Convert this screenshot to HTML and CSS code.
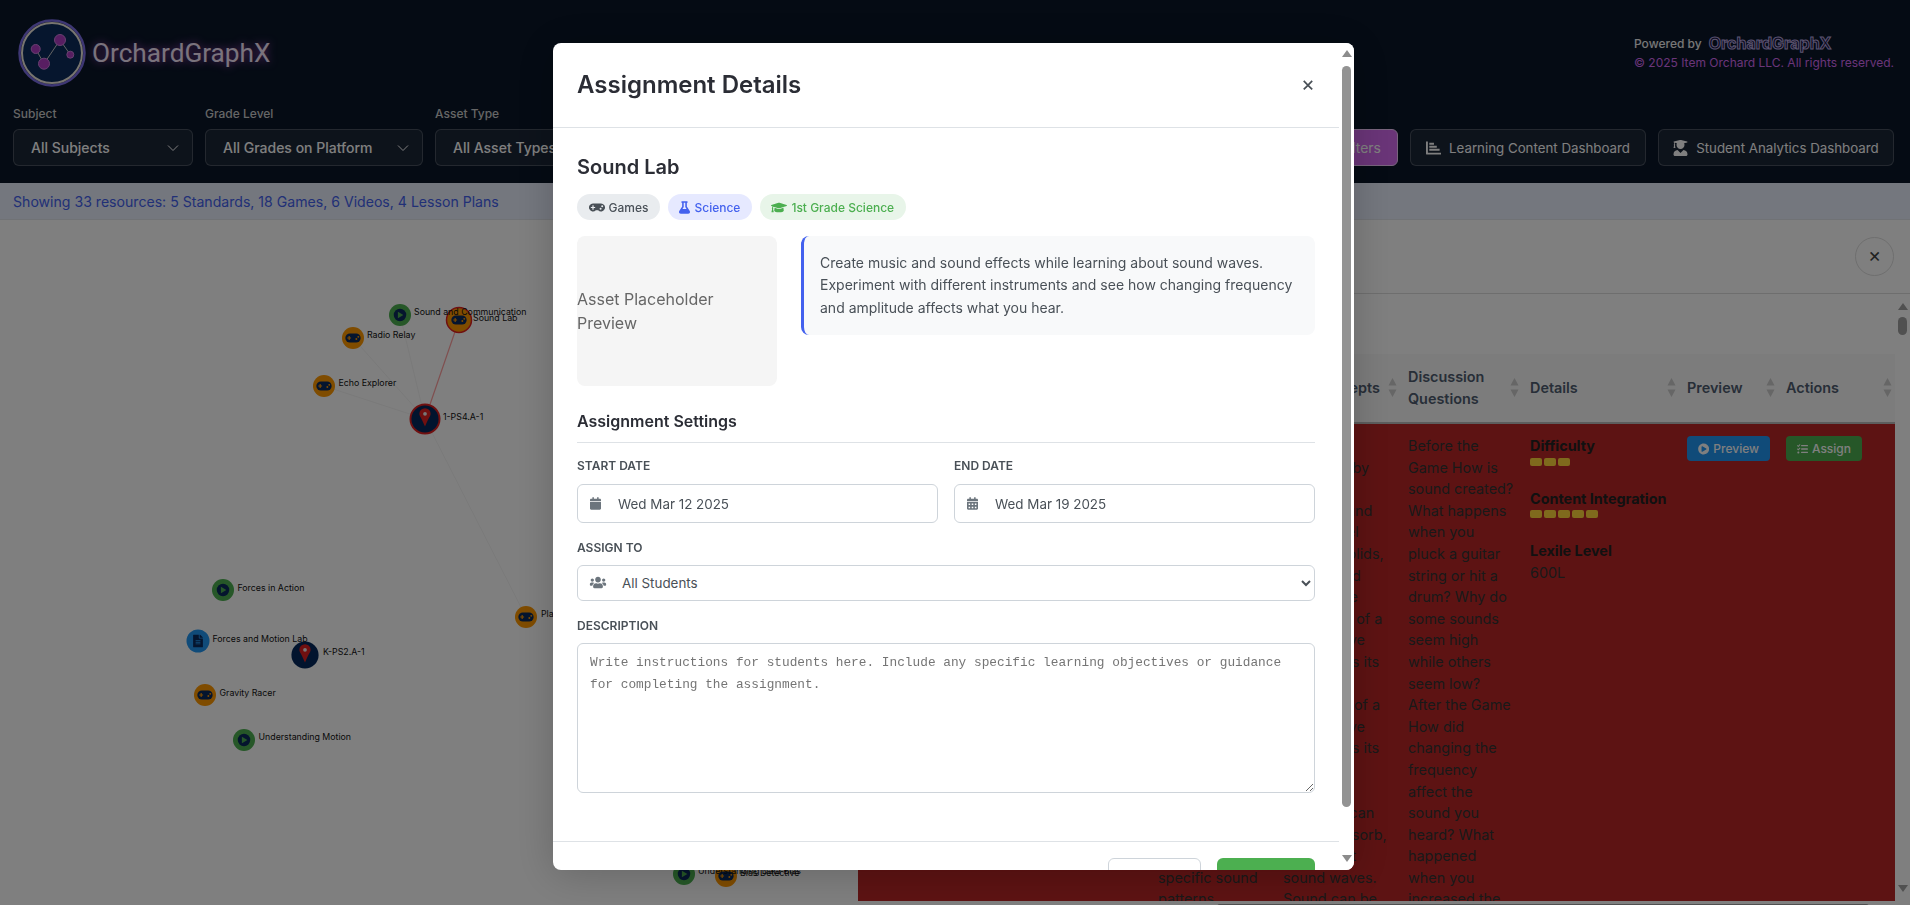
FILE: index.html
```html
<!DOCTYPE html>
<html lang="en">

<head>
    <meta charset="UTF-8">
    <title>OrchardGraphX</title>
    <link rel="stylesheet" href="styles.css">
</head>

<body>
    <!-- Icon set -->
    <svg class="icon-defs">
        <symbol id="i-gamepad" viewBox="0 0 640 512"><path fill-rule="evenodd" d="M480.07 96H160a160 160 0 1 0 114.24 272h91.52A160 160 0 1 0 480.07 96zM248 268a12 12 0 0 1-12 12h-52v52a12 12 0 0 1-12 12h-24a12 12 0 0 1-12-12v-52H84a12 12 0 0 1-12-12v-24a12 12 0 0 1 12-12h52v-52a12 12 0 0 1 12-12h24a12 12 0 0 1 12 12v52h52a12 12 0 0 1 12 12zm216 76a40 40 0 1 1 40-40 40 40 0 0 1-40 40zm64-96a40 40 0 1 1 40-40 40 40 0 0 1-40 40z"/></symbol>
        <symbol id="i-flask" viewBox="0 0 448 512"><path d="M437.2 403.5L320 215V64h8c13.3 0 24-10.7 24-24V24c0-13.3-10.7-24-24-24H120c-13.3 0-24 10.7-24 24v16c0 13.3 10.7 24 24 24h8v151L10.8 403.5C-18.5 450.6 15.3 512 70.9 512h306.2c55.7 0 89.4-61.5 60.1-108.5zM137.9 320l48.2-77.6c3.7-5.2 5.8-11.6 5.8-18.4V64h64v160c0 6.9 2.2 13.2 5.8 18.4l48.2 77.6h-172z"/></symbol>
        <symbol id="i-cap" viewBox="0 0 640 512"><path d="M622.34 153.2L343.4 67.5c-15.2-4.67-31.6-4.67-46.79 0L17.66 153.2c-23.54 7.23-23.54 38.36 0 45.59l48.63 14.94c-10.67 13.19-17.23 29.28-17.88 46.9C38.78 266.15 32 276.11 32 288c0 10.78 5.68 19.85 13.86 25.65L20.33 428.53C18.11 438.52 25.71 448 35.94 448h56.11c10.24 0 17.84-9.48 15.62-19.47L82.14 313.65C90.32 307.85 96 298.78 96 288c0-11.57-6.47-21.25-15.66-26.87.76-15.02 8.44-28.3 20.69-36.72L296.6 284.5c9.06 2.78 26.44 6.25 46.79 0l278.95-85.7c23.55-7.24 23.55-38.36 0-45.6zM352.79 315.09c-28.53 8.76-52.84 3.92-65.59 0l-145.02-44.55L128 384c0 35.35 85.96 64 192 64s192-28.65 192-64l-14.18-113.47-145.03 44.56z"/></symbol>
        <symbol id="i-calendar" viewBox="0 0 448 512"><path d="M12 192h424c6.6 0 12 5.4 12 12v260c0 26.5-21.5 48-48 48H48c-26.5 0-48-21.5-48-48V204c0-6.6 5.4-12 12-12zm436-44v-36c0-26.5-21.5-48-48-48h-48V12c0-6.6-5.4-12-12-12h-40c-6.6 0-12 5.4-12 12v52H160V12c0-6.6-5.400-12-12-12h-40c-6.6 0-12 5.4-12 12v52H48C21.5 64 0 85.5 0 112v36c0 6.6 5.4 12 12 12h424c6.6 0 12-5.4 12-12z"/></symbol>
        <symbol id="i-calendar-alt" viewBox="0 0 448 512"><path d="M0 464c0 26.5 21.5 48 48 48h352c26.5 0 48-21.5 48-48V192H0v272zm320-196c0-6.6 5.4-12 12-12h40c6.6 0 12 5.4 12 12v40c0 6.6-5.4 12-12 12h-40c-6.6 0-12-5.4-12-12v-40zm0 128c0-6.6 5.4-12 12-12h40c6.6 0 12 5.4 12 12v40c0 6.6-5.4 12-12 12h-40c-6.6 0-12-5.4-12-12v-40zM192 268c0-6.6 5.4-12 12-12h40c6.6 0 12 5.4 12 12v40c0 6.6-5.4 12-12 12h-40c-6.6 0-12-5.4-12-12v-40zm0 128c0-6.6 5.4-12 12-12h40c6.6 0 12 5.4 12 12v40c0 6.6-5.4 12-12 12h-40c-6.6 0-12-5.4-12-12v-40zM64 268c0-6.6 5.4-12 12-12h40c6.6 0 12 5.4 12 12v40c0 6.6-5.4 12-12 12H76c-6.6 0-12-5.4-12-12v-40zm0 128c0-6.6 5.4-12 12-12h40c6.6 0 12 5.4 12 12v40c0 6.6-5.4 12-12 12H76c-6.6 0-12-5.4-12-12v-40zM400 64h-48V16c0-8.8-7.2-16-16-16h-32c-8.8 0-16 7.2-16 16v48H160V16c0-8.8-7.2-16-16-16h-32c-8.8 0-16 7.2-16 16v48H48C21.5 64 0 85.5 0 112v48h448v-48c0-26.5-21.5-48-48-48z"/></symbol>
        <symbol id="i-users" viewBox="0 0 640 512"><path d="M96 224c35.3 0 64-28.7 64-64s-28.7-64-64-64-64 28.7-64 64 28.7 64 64 64zm448 0c35.3 0 64-28.7 64-64s-28.7-64-64-64-64 28.7-64 64 28.7 64 64 64zm32 32h-64c-17.6 0-33.5 7.1-45.1 18.6 40.3 22.1 68.9 62 75.1 109.4h66c17.7 0 32-14.3 32-32v-32c0-35.3-28.7-64-64-64zm-256 0c61.9 0 112-50.1 112-112S381.9 32 320 32 208 82.1 208 144s50.1 112 112 112zm76.8 32h-8.3c-20.8 10-43.9 16-68.5 16s-47.6-6-68.5-16h-8.3C179.6 288 128 339.6 128 403.2V432c0 26.5 21.5 48 48 48h288c26.5 0 48-21.5 48-48v-28.8c0-63.6-51.6-115.2-115.2-115.2zm-223.7-13.4C161.5 263.1 145.6 256 128 256H64c-35.3 0-64 28.7-64 64v32c0 17.7 14.3 32 32 32h65.9c6.3-47.4 34.9-87.3 75.2-109.4z"/></symbol>
        <symbol id="i-play" viewBox="0 0 512 512"><path d="M256 8C119 8 8 119 8 256s111 248 248 248 248-111 248-248S393 8 256 8zm115.700 272l-176 101c-15.800 8.800-35.700-2.500-35.700-21V152c0-18.400 19.800-29.800 35.700-21l176 107c16.400 9.200 16.400 32.900 0 42z"/></symbol>
        <symbol id="i-tasks" viewBox="0 0 512 512"><path d="M139.610 35.500a12 12 0 0 0-17 0L58.930 98.810l-22.700-22.120a12 12 0 0 0-17 0L3.530 92.410a12 12 0 0 0 0 17l47.590 47.400a12.780 12.780 0 0 0 17.610 0l15.590-15.620L156.520 69a12.090 12.090 0 0 0 .09-17zm0 159.190a12 12 0 0 0-17 0l-63.680 63.720-22.700-22.100a12 12 0 0 0-17 0L3.530 252a12 12 0 0 0 0 17L51 316.500a12.770 12.770 0 0 0 17.600 0l15.700-15.690 72.200-72.220a12 12 0 0 0 .09-16.900zM64 368c-26.490 0-48.590 21.500-48.590 48S37.530 464 64 464a48 48 0 0 0 0-96zm432 16H208a16 16 0 0 0-16 16v32a16 16 0 0 0 16 16h288a16 16 0 0 0 16-16v-32a16 16 0 0 0-16-16zm0-320H208a16 16 0 0 0-16 16v32a16 16 0 0 0 16 16h288a16 16 0 0 0 16-16V80a16 16 0 0 0-16-16zm0 160H208a16 16 0 0 0-16 16v32a16 16 0 0 0 16 16h288a16 16 0 0 0 16-16v-32a16 16 0 0 0-16-16z"/></symbol>
        <symbol id="i-chart" viewBox="0 0 16 16"><path d="M0 1h2v12h14v2H1a1 1 0 0 1-1-1zM3.500 2.500h5v2h-5zM3.500 5.700h8v2h-8zM3.500 8.900h11v2h-11z"/></symbol>
        <symbol id="i-student" viewBox="0 0 448 512"><path d="M319.4 320.600L224 416l-95.400-95.400C57.100 323.700 0 382.200 0 454.400v9.600c0 26.500 21.500 48 48 48h352c26.500 0 48-21.500 48-48v-9.600c0-72.200-57.100-130.700-128.600-133.800zM13.600 79.800l6.400 1.500v58.400c-7 4.200-12 11.500-12 20.300 0 8.400 4.600 15.400 11.100 19.700L3.500 242c-1.700 6.900 2.100 14 7.600 14h41.800c5.500 0 9.300-7.100 7.600-14l-15.600-62.300C51.400 175.400 56 168.400 56 160c0-8.800-5-16.100-12-20.300V87.100l66 15.900c-8.600 17.200-14 36.400-14 57 0 70.700 57.300 128 128 128s128-57.300 128-128c0-20.600-5.300-39.800-14-57l96.300-23.200c18.200-4.400 18.200-27.100 0-31.500l-190.400-46c-13-3.100-26.700-3.100-39.700 0L13.600 48.200c-18.100 4.400-18.100 27.200 0 31.600z"/></symbol>
        <symbol id="i-file" viewBox="0 0 384 512"><path d="M224 136V0H24C10.700 0 0 10.700 0 24v464c0 13.300 10.700 24 24 24h336c13.300 0 24-10.700 24-24V160H248c-13.200 0-24-10.800-24-24zm64 236c0 6.600-5.400 12-12 12H108c-6.600 0-12-5.400-12-12v-8c0-6.600 5.400-12 12-12h168c6.600 0 12 5.400 12 12v8zm0-64c0 6.600-5.400 12-12 12H108c-6.600 0-12-5.400-12-12v-8c0-6.600 5.400-12 12-12h168c6.600 0 12 5.400 12 12v8zm0-72v8c0 6.600-5.400 12-12 12H108c-6.600 0-12-5.400-12-12v-8c0-6.600 5.400-12 12-12h168c6.600 0 12 5.400 12 12zm96-114.100v6.100H256V0h6.100c6.400 0 12.500 2.500 17 7l97.900 98c4.500 4.500 7 10.600 7 16.900z"/></symbol>
        <symbol id="i-sort" viewBox="0 0 9 19"><path d="M4.500 0L8.500 7.500H.5zM4.500 19L.5 11.500h8z"/></symbol>
        <symbol id="i-chevron" viewBox="0 0 16 16"><path d="M3 5.500l5 5 5-5" fill="none" stroke="currentColor" stroke-width="1"/></symbol>

        <!-- Graph nodes, drawn around 0,0 -->
        <symbol id="n-game" viewBox="-12 -12 24 24" overflow="visible">
            <circle r="11.500" fill="#ff9800"/>
            <rect x="-8" y="-4.800" width="16" height="9.600" rx="4.800" fill="#0a2a5c"/>
            <path d="M-6 0h4M-4-2v4" stroke="#ff9800" stroke-width="1.200"/>
            <circle cx="3.500" cy="1" r="1" fill="#ff9800"/>
            <circle cx="5.500" cy="-1.200" r="1" fill="#ff9800"/>
        </symbol>
        <symbol id="n-video" viewBox="-12 -12 24 24" overflow="visible">
            <circle r="11.500" fill="#4caf50"/>
            <circle r="6.500" fill="#0a2a5c"/>
            <path d="M-2.200-3.500L3.500 0-2.200 3.500z" fill="#4caf50"/>
        </symbol>
        <symbol id="n-standard" viewBox="-16 -16 32 32" overflow="visible">
            <circle r="14.500" fill="#04295c"/>
            <path d="M0 9C-4-.5-6-2-6-4.500a6 6 0 0 1 12 0C6-2 4-.5 0 9z" fill="#e02020" transform="translate(0 -1)"/>
            <circle cy="-5.500" r="2" fill="#eee"/>
        </symbol>
    </svg>

    <div class="page">
        <header class="top">
            <div class="brand-row">
                <div class="brand">
                    <svg class="logo" viewBox="0 0 68 68">
                        <circle cx="34" cy="34" r="32.500" fill="none" stroke="#7d6fe8" stroke-width="2.500"/>
                        <circle cx="34" cy="34" r="30" fill="#0c2c5c" stroke="#f0ebe0" stroke-width="2"/>
                        <path d="M17.700 30L26 44.700 42 21 52.300 35.700" fill="none" stroke="#c8c8c8" stroke-width="1"/>
                        <circle cx="17.700" cy="30" r="4.500" fill="#b03cc4" stroke="#d080e0"/>
                        <circle cx="26" cy="44.700" r="5.500" fill="#b03cc4" stroke="#d080e0"/>
                        <circle cx="42" cy="21" r="5.500" fill="#b03cc4" stroke="#d080e0"/>
                        <circle cx="52.300" cy="35.700" r="3.500" fill="#b03cc4" stroke="#d080e0"/>
                    </svg>
                    <span class="brand-name">OrchardGraphX</span>
                </div>
                <div class="credit">
                    <div class="credit-line">Powered by <span class="credit-brand">OrchardGraphX</span></div>
                    <div class="credit-copy">© 2025 Item Orchard LLC. All rights reserved.</div>
                </div>
            </div>
            <div class="filter-row">
                <div class="filter">
                    <label>Subject</label>
                    <div class="filter-box subject">All Subjects <svg class="chev"><use href="#i-chevron"/></svg></div>
                </div>
                <div class="filter">
                    <label>Grade Level</label>
                    <div class="filter-box grade">All Grades on Platform <svg class="chev"><use href="#i-chevron"/></svg></div>
                </div>
                <div class="filter">
                    <label>Asset Type</label>
                    <div class="filter-box asset">All Asset Types <svg class="chev"><use href="#i-chevron"/></svg></div>
                </div>
                <div class="top-actions">
                    <button class="top-btn reset">Reset Filters</button>
                    <button class="top-btn"><svg class="top-icon"><use href="#i-chart"/></svg>Learning Content Dashboard</button>
                    <button class="top-btn"><svg class="top-icon"><use href="#i-student"/></svg>Student Analytics Dashboard</button>
                </div>
            </div>
        </header>

        <div class="status">Showing 33 resources: 5 Standards, 18 Games, 6 Videos, 4 Lesson Plans</div>

        <main class="work">
            <svg class="graph" viewBox="0 0 858 685">
                <g class="edges">
                    <path d="M425 199L400 95M425 199L353 118M425 199L324 166M425 199L526 397"/>
                </g>
                <path class="edge-on" d="M425 199L459 100"/>

                <use href="#n-video" x="388.500" y="83.500" width="23" height="23"/>
                <circle cx="459" cy="100" r="12.500" fill="#ff9800" stroke="#e02020" stroke-width="1.500"/>
                <use href="#n-game" x="447.500" y="88.500" width="23" height="23"/>
                <use href="#n-game" x="341.500" y="106.500" width="23" height="23"/>
                <use href="#n-game" x="312.500" y="154.500" width="23" height="23"/>
                <circle cx="425" cy="199" r="15.500" fill="#e02020"/>
                <use href="#n-standard" x="410" y="184" width="30" height="30"/>
                <use href="#n-game" x="514.500" y="385.500" width="23" height="23"/>
                <use href="#n-video" x="211.500" y="358.500" width="23" height="23"/>
                <circle cx="198" cy="421" r="11.500" fill="#2196f3"/>
                <use href="#i-file" x="193" y="414.500" width="10" height="13" fill="#0a2a5c"/>
                <use href="#n-standard" x="290" y="420" width="30" height="30"/>
                <use href="#n-game" x="193.500" y="463.500" width="23" height="23"/>
                <use href="#n-video" x="232.500" y="508.500" width="23" height="23"/>
                <use href="#n-video" x="672.500" y="642.500" width="23" height="23"/>
                <use href="#n-game" x="714.500" y="644.500" width="23" height="23"/>

                <g class="labels">
                    <text x="414" y="95">Sound and Communication</text>
                    <text x="473" y="101">Sound Lab</text>
                    <text x="367" y="118">Radio Relay</text>
                    <text x="338.500" y="166">Echo Explorer</text>
                    <text x="443" y="200">1-PS4.A-1</text>
                    <text x="541" y="397">Playground Physics</text>
                    <text x="237.500" y="371">Forces in Action</text>
                    <text x="212.500" y="422">Forces and Motion Lab</text>
                    <text x="323" y="435">K-PS2.A-1</text>
                    <text x="219.500" y="476">Gravity Racer</text>
                    <text x="258.500" y="520">Understanding Motion</text>
                    <text x="698" y="654">Understanding Data Bias</text>
                    <text x="740" y="656">Bias Detective</text>
                </g>
            </svg>

            <section class="panel">
                <div class="panel-head">
                    <button class="round-close">×</button>
                </div>
                <div class="panel-body">
                    <div class="panel-main">
                        <div class="panel-tools"></div>
                        <div class="table-wrap">
                            <table class="assets">
                                <colgroup>
                                    <col class="c-name"><col class="c-obj"><col class="c-key"><col class="c-disc"><col class="c-det"><col class="c-prev"><col class="c-act">
                                </colgroup>
                                <thead>
                                    <tr>
                                        <th><div class="th-in">Asset <svg class="sort"><use href="#i-sort"/></svg></div></th>
                                        <th><div class="th-in">Objectives <svg class="sort"><use href="#i-sort"/></svg></div></th>
                                        <th><div class="th-in">Key Concepts <svg class="sort"><use href="#i-sort"/></svg></div></th>
                                        <th><div class="th-in"><span>Discussion<br>Questions</span> <svg class="sort"><use href="#i-sort"/></svg></div></th>
                                        <th><div class="th-in">Details <svg class="sort"><use href="#i-sort"/></svg></div></th>
                                        <th><div class="th-in">Preview <svg class="sort"><use href="#i-sort"/></svg></div></th>
                                        <th><div class="th-in">Actions <svg class="sort"><use href="#i-sort"/></svg></div></th>
                                    </tr>
                                </thead>
                                <tbody>
                                    <tr class="row-on">
                                        <td>Sound Lab</td>
                                        <td>Students will<br>create sounds<br>with different<br>instruments.<br>They will<br>describe how<br>vibrations<br>make sound.<br>They will<br>compare high<br>and low<br>pitches.<br>They will<br>compare loud<br>and soft<br>sounds.<br>They will<br>observe how<br>waveforms<br>change and<br>specific sound<br>patterns.</td>
                                        <td>Sound is<br>produced by<br>vibrations.<br>travel around<br>They travel<br>through solids,<br>liquids, and<br>gases. The<br>frequency of a<br>sound wave<br>determines its<br>pitch.<br>amplitude of a<br>sound wave<br>determines its<br>volume.<br>Objects<br>Materials can<br>reflect, absorb,<br>or transmit<br>sound waves.<br>Sound can be</td>
                                        <td>Before the<br>Game How is<br>sound created?<br>What happens<br>when you<br>pluck a guitar<br>string or hit a<br>drum? Why do<br>some sounds<br>seem high<br>while others<br>seem low?<br>After the Game<br>How did<br>changing the<br>frequency<br>affect the<br>sound you<br>heard? What<br>happened<br>when you<br>increased the</td>
                                        <td>
                                            <div class="det-name">Difficulty</div>
                                            <div class="pips"><i></i><i></i><i></i></div>
                                            <div class="det-name">Content Integration</div>
                                            <div class="pips"><i></i><i></i><i></i><i></i><i></i></div>
                                            <div class="det-name">Lexile Level</div>
                                            <div>600L</div>
                                        </td>
                                        <td><button class="mini preview"><svg><use href="#i-play"/></svg>Preview</button></td>
                                        <td><button class="mini assign"><svg><use href="#i-tasks"/></svg>Assign</button></td>
                                    </tr>
                                </tbody>
                            </table>
                        </div>
                        <div class="hbar">
                            <span class="hbar-thumb"></span>
                        </div>
                    </div>
                    <div class="rail rail-page">
                        <span class="arrow-up"></span>
                        <span class="rail-thumb"></span>
                        <span class="arrow-down"></span>
                    </div>
                </div>
            </section>
        </main>
    </div>

    <!-- Assignment modal -->
    <div class="overlay">
        <div class="modal">
            <div class="modal-main">
                <div class="modal-head">
                    <h2>Assignment Details</h2>
                    <button class="modal-x">×</button>
                </div>
                <div class="modal-body">
                    <h3 class="asset-title">Sound Lab</h3>
                    <div class="badges">
                        <span class="badge b-type"><svg class="wide"><use href="#i-gamepad"/></svg>Games</span>
                        <span class="badge b-subject"><svg><use href="#i-flask"/></svg>Science</span>
                        <span class="badge b-grade"><svg class="wide"><use href="#i-cap"/></svg>1st Grade Science</span>
                    </div>
                    <div class="asset-row">
                        <div class="asset-thumb">Asset Placeholder Preview</div>
                        <p class="asset-desc">Create music and sound effects while learning about sound waves. Experiment with different instruments and see how changing frequency and amplitude affects what you hear.</p>
                    </div>

                    <h4 class="settings-title">Assignment Settings</h4>
                    <div class="date-row">
                        <div class="field">
                            <label>Start Date</label>
                            <div class="date-input"><svg><use href="#i-calendar"/></svg>Wed Mar 12 2025</div>
                        </div>
                        <div class="field">
                            <label>End Date</label>
                            <div class="date-input"><svg><use href="#i-calendar-alt"/></svg>Wed Mar 19 2025</div>
                        </div>
                    </div>
                    <div class="field assign-field">
                        <label>Assign To</label>
                        <div class="select-wrap">
                            <svg class="select-icon"><use href="#i-users"/></svg>
                            <select class="assign-select">
                                <option>All Students</option>
                            </select>
                        </div>
                    </div>
                    <div class="field">
                        <label>Description</label>
                        <textarea class="desc-input" placeholder="Write instructions for students here. Include any specific learning objectives or guidance for completing the assignment."></textarea>
                    </div>
                </div>
                <div class="modal-foot">
                    <button class="btn-cancel">Cancel</button>
                    <button class="btn-assign">Assign</button>
                </div>
            </div>
            <div class="rail rail-modal">
                <span class="arrow-up"></span>
                <span class="rail-thumb"></span>
                <span class="arrow-down"></span>
            </div>
        </div>
    </div>
</body>

</html>
```

FILE: styles.css
```css
* {
    box-sizing: border-box;
}
html, body {
    margin: 0;
    height: 905px;
    overflow: hidden;
}
body {
    font-family: 'Inter', 'Liberation Sans', sans-serif;
    font-size: 14.4px;
    color: #333;
    background-color: #fff;
}
button {
    font-family: inherit;
}
.icon-defs {
    display: none;
}
.page {
    height: 905px;
    display: flex;
    flex-direction: column;
}

/* Header */
.top {
    height: 183px;
    background-color: #0a1628;
    padding: 0 16px 0 13px;
    display: flex;
    flex-direction: column;
}
.brand-row {
    height: 107px;
    display: flex;
    justify-content: space-between;
}
.brand {
    display: flex;
    align-items: center;
    gap: 6px;
    height: 105px;
    padding-left: 5px;
}
.logo {
    width: 68px;
    height: 68px;
}
.brand-name {
    font-family: 'Roboto', sans-serif;
    font-size: 26.200px;
    color: #f4e6fa;
    text-shadow: 0 0 8px rgba(214, 90, 240, .8);
}
.credit {
    width: 260px;
    padding-top: 33px;
    white-space: nowrap;
}
.credit-line {
    display: flex;
    align-items: center;
    gap: 7px;
    height: 20px;
    font-size: 12px;
    font-weight: 500;
    color: #eee;
}
.credit-brand {
    font-size: 16px;
    font-weight: 700;
    color: #14143a;
    -webkit-text-stroke: 1px #b8a8e0;
}
.credit-copy {
    font-size: 12px;
    line-height: 20px;
    color: #d46af0;
}
.filter-row {
    display: flex;
    gap: 12px;
}
.filter label {
    display: block;
    font-size: 12px;
    line-height: 14px;
    font-weight: 500;
    color: #ccc;
    margin-bottom: 8px;
}
.filter-box {
    height: 37px;
    padding: 0 11px 0 17px;
    display: flex;
    align-items: center;
    justify-content: space-between;
    border: 1px solid rgba(255, 255, 255, .2);
    border-radius: 6px;
    background-color: rgba(255, 255, 255, .07);
    color: #fff;
    font-size: 14px;
    font-weight: 500;
}
.subject {
    width: 180px;
}
.grade {
    width: 218px;
}
.asset {
    width: 190px;
}
.chev {
    width: 16px;
    height: 16px;
}
.top-actions {
    margin-left: auto;
    padding-top: 22px;
    display: flex;
    gap: 12px;
}
.top-btn {
    height: 37px;
    width: 236px;
    padding: 0 8px;
    display: flex;
    align-items: center;
    justify-content: center;
    gap: 8px;
    border: 1px solid rgba(255, 255, 255, .2);
    border-radius: 6px;
    background-color: rgba(255, 255, 255, .07);
    color: #fff;
    font-size: 13.300px;
    white-space: nowrap;
}
.top-btn.reset {
    width: 124px;
    padding-right: 16px;
    justify-content: flex-end;
    background-color: #d46af0;
    border-color: #f0c8fa;
    font-size: 14px;
}
.top-icon {
    width: 15px;
    height: 16px;
    fill: currentColor;
}

/* Status line */
.status {
    height: 37px;
    padding: 0 13px;
    display: flex;
    align-items: center;
    font-size: 14.100px;
    color: #4361ee;
    background-color: #e8eefc;
    border-bottom: 1px solid #e0e4ea;
}

/* Graph and table */
.work {
    flex: 1;
    display: flex;
    min-height: 0;
}
.graph {
    width: 858px;
    height: 685px;
    flex: none;
    background-color: #fff;
}
.edges path {
    fill: none;
    stroke: #f4f4f4;
    stroke-width: 1;
}
.edge-on {
    fill: none;
    stroke: #ff9f9f;
    stroke-width: 1.200;
}
.labels text {
    font-size: 8.800px;
    fill: #111;
}
.panel {
    flex: 1;
    display: flex;
    flex-direction: column;
    min-width: 0;
}
.panel-head {
    height: 74px;
    flex: none;
    padding: 17px 16px 0 0;
    display: flex;
    justify-content: flex-end;
    border-bottom: 1px solid #ddd;
}
.round-close {
    width: 39px;
    height: 39px;
    padding: 0 0 3px;
    border: 1px solid #ddd;
    border-radius: 50%;
    background-color: #fff;
    color: #444;
    font-size: 20px;
}
.panel-body {
    flex: 1;
    display: flex;
    min-height: 0;
}
.panel-main {
    flex: 1;
    min-width: 0;
    display: flex;
    flex-direction: column;
}
.panel-tools {
    height: 60px;
    flex: none;
}
.table-wrap {
    height: 547px;
    flex: none;
    overflow: hidden;
}
.assets {
    width: 1037px;
    table-layout: fixed;
    border-collapse: collapse;
    line-height: 21.600px;
}
.c-name { width: 292px; }
.c-obj { width: 125px; }
.c-key { width: 125px; }
.c-disc { width: 122px; }
.c-det { width: 157px; }
.c-prev { width: 99px; }
.c-act { width: 117px; }
.assets th {
    height: 69px;
    padding: 0 2px 1px 8px;
    text-align: left;
    font-weight: 600;
    color: #4f5d70;
    background-color: #f8f8f8;
    border-bottom: 2px solid #bbb;
}
.th-in {
    display: flex;
    align-items: center;
    justify-content: space-between;
}
.sort {
    width: 9px;
    height: 19px;
    flex: none;
    fill: #ccc;
    margin-right: 1px;
}
.assets td {
    padding: 11px 8px;
    vertical-align: top;
    color: #333;
}
.row-on td {
    background-color: #bb2626;
}
.det-name {
    font-weight: 700;
    color: #222;
}
.pips {
    display: flex;
    gap: 2px;
    margin: 1px 0 22px;
}
.pips i {
    width: 12px;
    height: 8px;
    border-radius: 2px;
    background-color: #ffd43b;
}
.mini {
    height: 25px;
    margin-top: 1px;
    padding: 0 11px;
    display: inline-flex;
    align-items: center;
    gap: 4px;
    border: none;
    border-radius: 4px;
    color: #fff;
    font-size: 12px;
    font-weight: 500;
}
.mini svg {
    width: 12px;
    height: 12px;
    fill: currentColor;
}
.mini.preview {
    width: 83px;
    background-color: #2196f3;
}
.mini.assign {
    width: 76px;
    background-color: #4caf50;
}
.hbar {
    flex: 1;
    padding: 3px 26px 0 359px;
}
.hbar-thumb {
    display: block;
    height: 6px;
    border-radius: 3px;
    background-color: #a0a0a0;
}

/* Hand drawn scroll rails */
.rail {
    width: 15px;
    flex: none;
    display: flex;
    flex-direction: column;
    align-items: center;
}
.rail-thumb {
    width: 9px;
    border-radius: 5px;
}
.arrow-up, .arrow-down {
    width: 0;
    height: 0;
    border-left: 5px solid transparent;
    border-right: 5px solid transparent;
}
.arrow-up {
    border-bottom: 7px solid;
}
.arrow-down {
    border-top: 7px solid;
    margin-top: auto;
}
.rail-page {
    padding: 9px 0 13px;
    color: #a0a0a0;
}
.rail-page .rail-thumb {
    height: 18px;
    margin-top: 7px;
    background-color: #a0a0a0;
}
.rail-modal {
    padding: 7px 0 8px;
    color: #8c8c8c;
    background-color: #fff;
}
.rail-modal .rail-thumb {
    height: 741px;
    margin-top: 9px;
    background-color: #939393;
}

/* Modal */
.overlay {
    position: fixed;
    inset: 0;
    background-color: rgba(0, 0, 0, .5);
}
.modal {
    position: absolute;
    left: 553px;
    top: 43px;
    width: 801px;
    height: 827px;
    display: flex;
    overflow: hidden;
    background-color: #fff;
    border-radius: 8px;
    box-shadow: 0 4px 40px rgba(0, 0, 0, .2);
}
.modal-main {
    flex: 1;
    min-width: 0;
}
.modal-head {
    height: 85px;
    padding: 0 24px 2px;
    display: flex;
    align-items: center;
    justify-content: space-between;
    border-bottom: 1px solid #dee2e6;
}
.modal-head h2 {
    margin: 0;
    font-size: 24px;
    font-weight: 600;
    color: #2b2d35;
}
.modal-x {
    padding: 0 0 2px;
    border: none;
    background: none;
    font-size: 21px;
    color: #495057;
}
.modal-body {
    padding: 24px 24px 0;
    height: 714px;
    overflow: hidden;
    border-bottom: 1px solid #dee2e6;
}
.asset-title {
    margin: 0;
    font-size: 20px;
    line-height: 30px;
    font-weight: 600;
    color: #2b2d35;
}
.badges {
    display: flex;
    gap: 8px;
    margin: 12px 0 16px;
}
.badge {
    height: 26px;
    padding: 0 11.500px;
    display: flex;
    align-items: center;
    gap: 4px;
    border-radius: 13px;
    font-size: 12px;
    font-weight: 500;
}
.badge svg {
    width: 11px;
    height: 13px;
    fill: currentColor;
}
.badge svg.wide {
    width: 16px;
}
.b-type {
    background-color: #e9ecef;
    color: #495057;
}
.b-subject {
    background-color: #e6e9ff;
    color: #4361ee;
}
.b-grade {
    background-color: #e8f5e9;
    color: #4caf50;
}
.asset-row {
    display: flex;
    align-items: flex-start;
    gap: 24px;
}
.asset-thumb {
    width: 200px;
    height: 150px;
    flex: none;
    display: flex;
    align-items: center;
    border-radius: 8px;
    background-color: #f5f5f5;
    color: #666;
    font-size: 16px;
    line-height: 24px;
}
.asset-desc {
    flex: 1;
    margin: 0;
    padding: 16px;
    border-left: 3px solid #4361ee;
    border-radius: 8px;
    background-color: #f8f9fa;
    color: #495057;
    font-size: 14px;
    line-height: 22.400px;
}
.settings-title {
    margin: 23px 0 14px;
    padding-bottom: 9px;
    border-bottom: 1px solid #dee2e6;
    font-size: 16px;
    line-height: 24px;
    font-weight: 600;
    color: #2b2d35;
}
.field {
    margin-bottom: 15px;
}
.field label {
    display: block;
    margin-bottom: 9px;
    font-size: 12px;
    line-height: 17px;
    font-weight: 600;
    text-transform: uppercase;
    color: #495057;
}
.date-row {
    display: grid;
    grid-template-columns: 361px 361px;
    gap: 16px;
}
.date-row .field {
    margin-bottom: 16px;
}
.date-row label {
    margin-bottom: 10px;
}
.assign-field {
    margin-bottom: 16px;
}
.date-input {
    height: 39px;
    padding-left: 12px;
    display: flex;
    align-items: center;
    gap: 17px;
    border: 1px solid #ced4da;
    border-radius: 6px;
    font-size: 13.400px;
    color: #495057;
}
.date-input svg {
    width: 11px;
    height: 13px;
    fill: #6c757d;
}
.select-wrap {
    position: relative;
}
.select-icon {
    position: absolute;
    left: 12px;
    top: 11px;
    width: 18px;
    height: 13px;
    fill: #6c757d;
}
.assign-select {
    display: block;
    width: 100%;
    height: 36px;
    padding-left: 40px;
    border: 1px solid #ced4da;
    border-radius: 6px;
    background-color: #fff;
    font-family: inherit;
    font-size: 13.400px;
    color: #495057;
}
.desc-input {
    display: block;
    width: 100%;
    height: 150px;
    padding: 8px 12px;
    border: 1px solid #ced4da;
    border-radius: 6px;
    font-family: 'Liberation Mono', monospace;
    font-size: 12.800px;
    line-height: 21.500px;
    color: #495057;
}
.desc-input::placeholder {
    color: #757575;
}
.modal-foot {
    padding: 16px 24px;
    display: flex;
    justify-content: flex-end;
    gap: 16px;
}
.btn-cancel, .btn-assign {
    height: 40px;
    border-radius: 6px;
    font-size: 14px;
}
.btn-cancel {
    width: 93px;
    border: 1px solid #ced4da;
    background-color: #fff;
    color: #495057;
}
.btn-assign {
    width: 98px;
    border: none;
    background-color: #4caf50;
    color: #fff;
}
```
